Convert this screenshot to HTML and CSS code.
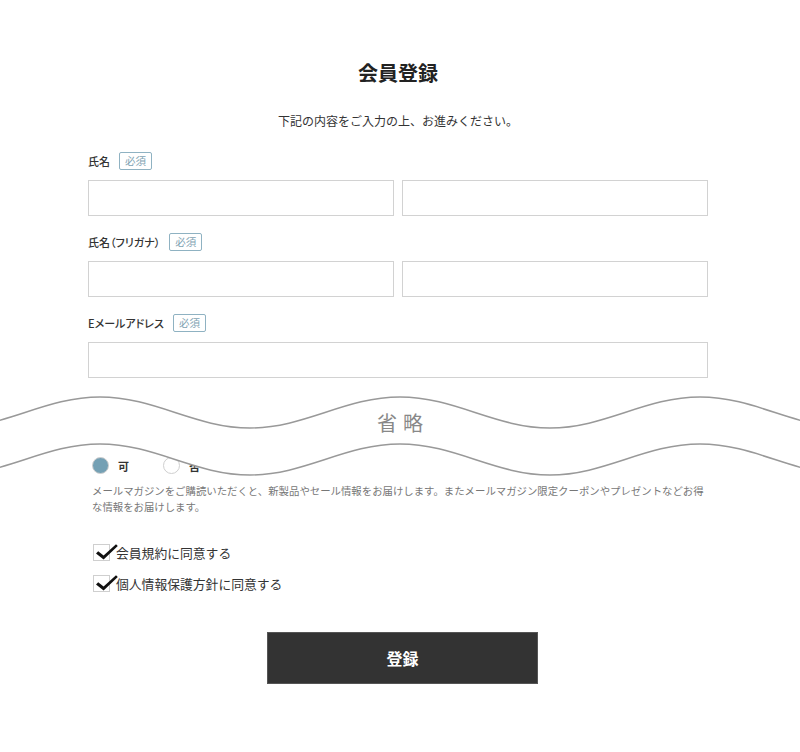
FILE: index.html
```html
<!DOCTYPE html>
<html lang="ja">
<head>
    <meta charset="UTF-8">
    <meta name="viewport" content="width=device-width, initial-scale=1.0">
    <title>会員登録</title>
    <link rel="stylesheet" href="styles.css">
</head>
<body>

    <div class="page">
        <h1 class="title">会員登録</h1>
        <p class="lead">下記の内容をご入力の上、お進みください。</p>

        <form class="form">
            <div class="field">
                <div class="field-label">氏名 <span class="req">必須</span></div>
                <div class="pair">
                    <input class="input" type="text">
                    <input class="input" type="text">
                </div>
            </div>

            <div class="field">
                <div class="field-label">氏名（フリガナ） <span class="req">必須</span></div>
                <div class="pair">
                    <input class="input" type="text">
                    <input class="input" type="text">
                </div>
            </div>

            <div class="field">
                <div class="field-label">Eメールアドレス <span class="req">必須</span></div>
                <input class="input" type="email">
            </div>

            <div class="mailmag">
                <div class="radios">
                    <label class="radio"><span class="dot checked"></span>可</label>
                    <label class="radio"><span class="dot"></span>否</label>
                </div>
                <p class="note">メールマガジンをご購読いただくと、新製品やセール情報をお届けします。またメールマガジン限定クーポンやプレゼントなどお得な情報をお届けします。</p>
            </div>

            <div class="agree">
                <label class="check">
                    <span class="box">
                        <svg class="tick" width="24" height="18" viewBox="0 0 24 18"><path d="M1 9.5 L3.2 7.3 L8.6 11.6 L21 0.2 L22.8 2 L8.6 15.4 Z"/></svg>
                    </span>
                    会員規約に同意する
                </label>
                <label class="check">
                    <span class="box">
                        <svg class="tick" width="24" height="18" viewBox="0 0 24 18"><path d="M1 9.5 L3.2 7.3 L8.6 11.6 L21 0.2 L22.8 2 L8.6 15.4 Z"/></svg>
                    </span>
                    個人情報保護方針に同意する
                </label>
            </div>

            <div class="submit">
                <button class="btn" type="button">登録</button>
            </div>
        </form>
    </div>

    <!-- 省略の帯 -->
    <div class="omit">
        <svg class="wave" width="800" height="100" viewBox="0 0 800 100">
            <path class="wave-fill" d="M -50 48 C 5 48, 45 17, 100 17 C 155 17, 195 48, 250 48 C 305 48, 345 17, 400 17 C 455 17, 495 48, 550 48 C 605 48, 645 17, 700 17 C 755 17, 795 48, 850 48 L 850 95 C 795 95, 755 64, 700 64 C 645 64, 605 95, 550 95 C 495 95, 455 64, 400 64 C 345 64, 305 95, 250 95 C 195 95, 155 64, 100 64 C 45 64, 5 95, -50 95 Z"/>
            <path class="wave-line" d="M -50 48 C 5 48, 45 17, 100 17 C 155 17, 195 48, 250 48 C 305 48, 345 17, 400 17 C 455 17, 495 48, 550 48 C 605 48, 645 17, 700 17 C 755 17, 795 48, 850 48"/>
            <path class="wave-line" d="M -50 95 C 5 95, 45 64, 100 64 C 155 64, 195 95, 250 95 C 305 95, 345 64, 400 64 C 455 64, 495 95, 550 95 C 605 95, 645 64, 700 64 C 755 64, 795 95, 850 95"/>
        </svg>
        <div class="omit-text">省略</div>
    </div>

</body>
</html>
```

FILE: styles.css
```css
body {
    margin: 0;
    position: relative;
    background-color: #fff;
    color: #333;
    font-family: "Noto Sans CJK JP", "Noto Sans", sans-serif;
}

.page {
    width: 620px;
    margin-left: 88px;
    padding-top: 59px;
}

.title {
    margin: 0;
    font-size: 20px;
    line-height: 28px;
    font-weight: 700;
    text-align: center;
    color: #222;
}

.lead {
    margin: 24px 0 0;
    font-size: 12px;
    line-height: 20px;
    text-align: center;
}

.form {
    margin-top: 21px;
}

.field {
    margin-bottom: 17px;
}

.field-label {
    display: flex;
    align-items: center;
    gap: 9px;
    height: 18px;
    margin-bottom: 10px;
    font-size: 11px;
    font-weight: 500;
    font-feature-settings: "palt";
}

.req {
    box-sizing: border-box;
    height: 18px;
    padding: 0 5px;
    border: 1px solid #8fb2c2;
    border-radius: 2px;
    color: #7fa3b3;
    font-size: 10.5px;
    font-weight: 400;
    line-height: 16px;
    font-feature-settings: normal;
}

.pair {
    display: grid;
    grid-template-columns: 1fr 1fr;
    gap: 8px;
}

.input {
    display: block;
    box-sizing: border-box;
    width: 100%;
    height: 36px;
    margin: 0;
    border: 1px solid #d2d2d2;
    border-radius: 0;
    background: #fff;
}

.mailmag {
    margin-top: 79px;
    padding-left: 4px;
}

.radios {
    display: flex;
    align-items: center;
    height: 17px;
    gap: 34px;
}

.radio {
    display: flex;
    align-items: center;
    gap: 9px;
    font-size: 11px;
    font-weight: 700;
}

.dot {
    box-sizing: border-box;
    width: 17px;
    height: 17px;
    border: 1px solid #cfcfcf;
    border-radius: 50%;
    background: #fff;
}

.dot.checked {
    background: #74a0b4;
}

.note {
    margin: 9px 0 0;
    font-size: 10.4px;
    line-height: 16px;
    color: #777;
}

.agree {
    margin-top: 29px;
    padding-left: 5px;
}

.check {
    display: flex;
    align-items: center;
    gap: 6px;
    height: 17px;
    margin-bottom: 14px;
    font-size: 12.8px;
}

.box {
    position: relative;
    box-sizing: border-box;
    width: 17px;
    height: 17px;
    border: 1px solid #cfcfcf;
    background: #fff;
}

.tick {
    position: absolute;
    left: 1px;
    top: -1px;
    fill: #111;
}

.submit {
    margin-top: 40px;
    padding-left: 9px;
    text-align: center;
}

.btn {
    width: 271px;
    height: 52px;
    border: 1px solid #555;
    background: #333;
    color: #fff;
    font-family: inherit;
    font-size: 16px;
    font-weight: 700;
    cursor: pointer;
}

.omit {
    position: absolute;
    top: 380px;
    left: 0;
    width: 800px;
    height: 100px;
}

.wave {
    position: absolute;
    top: 0;
    left: 0;
}

.wave-fill {
    fill: #fff;
}

.wave-line {
    fill: none;
    stroke: #999;
    stroke-width: 1.5;
}

.omit-text {
    position: relative;
    padding-top: 29px;
    padding-left: 6px;
    font-size: 20px;
    line-height: 28px;
    letter-spacing: 6px;
    text-align: center;
    color: #888;
}
```
